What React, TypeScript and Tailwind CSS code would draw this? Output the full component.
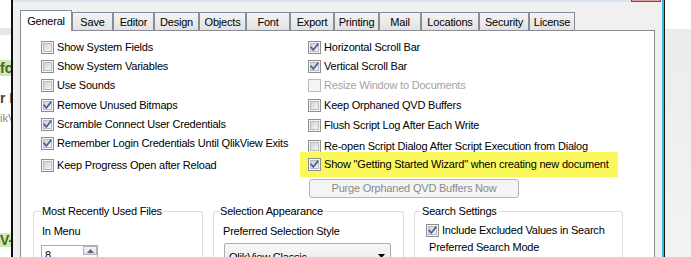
import React from "react";

function Box({ checked = false, disabled = false }: { checked?: boolean; disabled?: boolean }) {
  return (
    <svg width="13" height="13" viewBox="0 0 13 13" className="shrink-0 block">
      <defs>
        <linearGradient id="cbg" x1="0" y1="0" x2="1" y2="1">
          <stop offset="0" stopColor="#cfd0d3" />
          <stop offset="1" stopColor="#f7f7f7" />
        </linearGradient>
      </defs>
      <rect x="0.5" y="0.5" width="12" height="12" fill="#f4f4f4" stroke={disabled ? "#bcbcbc" : "#8e8f8f"} />
      {!disabled && <rect x="2.5" y="2.5" width="8" height="8" fill="url(#cbg)" stroke="#b9bbbe" />}
      {checked && (
        <path d="M3.2 6.4 L5.3 9 L9.8 3.3" fill="none" stroke="#4a5f97" strokeWidth="1.7" strokeLinecap="square" />
      )}
    </svg>
  );
}

function Row({ label, checked, disabled, h = "h-[19px]" }: { label: string; checked?: boolean; disabled?: boolean; h?: string }) {
  return (
    <div className={`flex items-center gap-[3px] ${h}`}>
      <Box checked={checked} disabled={disabled} />
      <span className={`whitespace-nowrap leading-[13px] ${disabled ? "text-[#a3a3a3]" : "text-black"}`}>{label}</span>
    </div>
  );
}

const tabs: [string, string][] = [
  ["Save", "w-[41px]"],
  ["Editor", "w-[41px]"],
  ["Design", "w-[45px]"],
  ["Objects", "w-[47px]"],
  ["Font", "w-[44px]"],
  ["Export", "w-[44px]"],
  ["Printing", "w-[45px]"],
  ["Mail", "w-[42px]"],
  ["Locations", "w-[58px]"],
  ["Security", "w-[50px]"],
  ["License", "w-[46px]"],
];

export default function App() {
  return (
    <div
      className="w-[691px] h-[257px] flex overflow-hidden bg-white text-[11px] tracking-[-0.2px] text-black"
      style={{ fontFamily: '"Liberation Sans", Arial, sans-serif' }}
    >
      {/* left page strip */}
      <div className="w-[11px] shrink-0 flex flex-col overflow-hidden bg-white tracking-normal">
        <div className="h-[28px]" />
        <div className="h-[7px] bg-[#e6e6e6]" />
        <div className="h-[25px]" />
        <div className="h-[16px] bg-[#d2e7b4] text-[#3e6b1e] font-bold text-[14px] leading-[16px] whitespace-nowrap">fc</div>
        <div className="h-[14px]" />
        <div className="h-[16px] text-[#444] font-bold text-[14px] leading-[16px] whitespace-nowrap">r L</div>
        <div className="h-[6px]" />
        <div className="h-[13px] text-[#8a8a8a] text-[11px] leading-[13px] whitespace-nowrap">ikV</div>
        <div className="h-[108px]" />
        <div className="h-[14px] bg-[#d2e7b4] text-[#3e6b1e] font-bold text-[14px] leading-[14px] whitespace-nowrap">V-</div>
      </div>
      <div className="w-[2px] shrink-0 bg-[#111]" />

      {/* window */}
      <div className="w-[649px] shrink-0 flex flex-col bg-[#f0f0f0]">
        <div className="h-[4px] bg-[#d9e5f3] flex justify-end">
          <div className="w-[30px] h-[2px] mr-[1px] bg-[#dba3a3] border-x border-b border-[#8b3f3f]" />
        </div>
        <div className="mt-[8px] ml-[7px] flex items-end h-[20px]">
          <div className="relative z-10 w-[52px] h-[21px] -mb-[1px] bg-white border border-b-0 border-[#898c95] flex items-center justify-center">
            General
          </div>
          {tabs.map(([t, w]) => (
            <div
              key={t}
              className={`${w} h-[18px] border border-b-0 border-[#898c95] bg-gradient-to-b from-[#f4f4f4] to-[#e2e2e2] flex items-center justify-center pt-[1px]`}
            >
              {t}
            </div>
          ))}
        </div>
        <div className="ml-[7px] w-[635px] flex-1 bg-white border border-[#898c95] border-b-0 flex flex-col">
          <div className="flex pt-[7px] pl-[20px]">
            <div className="w-[267px] flex flex-col">
              <Row label="Show System Fields" />
              <Row label="Show System Variables" />
              <Row label="Use Sounds" />
              <Row label="Remove Unused Bitmaps" checked h="h-[20px]" />
              <Row label="Scramble Connect User Credentials" checked />
              <Row label="Remember Login Credentials Until QlikView Exits" checked />
              <div className="mt-[2px]">
                <Row label="Keep Progress Open after Reload" h="h-[20px]" />
              </div>
            </div>
            <div className="flex flex-col">
              <Row label="Horizontal Scroll Bar" checked />
              <Row label="Vertical Scroll Bar" checked />
              <Row label="Resize Window to Documents" disabled />
              <Row label="Keep Orphaned QVD Buffers" h="h-[20px]" />
              <Row label="Flush Script Log After Each Write" h="h-[20px]" />
              <Row label="Re-open Script Dialog After Script Execution from Dialog" h="h-[17px] pt-[5px]" />
              <div className="-ml-[8px] w-[318px] h-[25px] bg-[#fbf85c] pl-[8px] flex items-center">
                <Row label={'Show "Getting Started Wizard" when creating new document'} h="h-[25px]" checked />
              </div>
              <div className="mt-[2px] ml-[1px] w-[210px] h-[19px] rounded-[3px] border border-[#b5b5b5] bg-[#f4f4f4] text-[#8a8a8a] flex items-center justify-center">
                Purge Orphaned QVD Buffers Now
              </div>
            </div>
          </div>

          {/* group boxes */}
          <div className="flex gap-[10px] pl-[12px] mt-[13px] flex-1">
            <div className="relative w-[170px] border border-b-0 border-[#d5dfe5] rounded-t-[3px] flex flex-col">
              <span className="absolute -top-[7px] left-[7px] px-[1px] bg-white leading-[13px] whitespace-nowrap">Most Recently Used Files</span>
              <div className="pt-[13px] pl-[8px] leading-[13px]">In Menu</div>
              <div className="mt-[7px] ml-[7px] w-[57px] h-[21px] border border-[#abadb3] flex">
                <span className="pl-[3px] pt-[3px] leading-[13px] flex-1">8</span>
                <div className="w-[14px] h-[9px] border border-[#b5b5b5] bg-gradient-to-b from-[#f6f6f6] to-[#e0e0e0] flex items-center justify-center">
                  <svg width="7" height="4" viewBox="0 0 7 4"><path d="M0 4 L3.5 0 L7 4 Z" fill="#4d6185" /></svg>
                </div>
              </div>
            </div>
            <div className="relative w-[191px] border border-b-0 border-[#d5dfe5] rounded-t-[3px] flex flex-col">
              <span className="absolute -top-[7px] left-[5px] px-[1px] bg-white leading-[13px] whitespace-nowrap">Selection Appearance</span>
              <div className="pt-[13px] pl-[9px] leading-[13px]">Preferred Selection Style</div>
              <div className="mt-[5px] ml-[10px] w-[167px] h-[21px] border border-[#acacac] rounded-[2px] bg-gradient-to-b from-[#f7f7f7] to-[#ececec] flex items-start">
                <span className="pl-[4px] pt-[7px] leading-[13px] flex-1">QlikView Classic</span>
                <svg width="7" height="4" viewBox="0 0 7 4" className="mt-[10px] mr-[5px]"><path d="M0 0 L7 0 L3.5 4 Z" fill="#000" /></svg>
              </div>
            </div>
            <div className="relative w-[209px] border border-b-0 border-[#d5dfe5] rounded-t-[3px] flex flex-col">
              <span className="absolute -top-[7px] left-[6px] px-[1px] bg-white leading-[13px] whitespace-nowrap">Search Settings</span>
              <div className="pt-[12px] pl-[11px]">
                <Row label="Include Excluded Values in Search" checked h="h-[13px]" />
              </div>
              <div className="mt-[4px] pl-[14px] leading-[13px]">Preferred Search Mode</div>
            </div>
          </div>
        </div>
      </div>

      <div className="w-[2px] shrink-0 bg-[#3fb8e6]" />
      <div className="w-[1px] shrink-0 bg-[#1a1a1a]" />
      <div className="w-[26px] shrink-0 flex flex-col">
        <div className="h-[29px] bg-white" />
        <div className="flex-1 bg-gradient-to-b from-[#ececec] to-[#f3f3f3]" />
      </div>
    </div>
  );
}
